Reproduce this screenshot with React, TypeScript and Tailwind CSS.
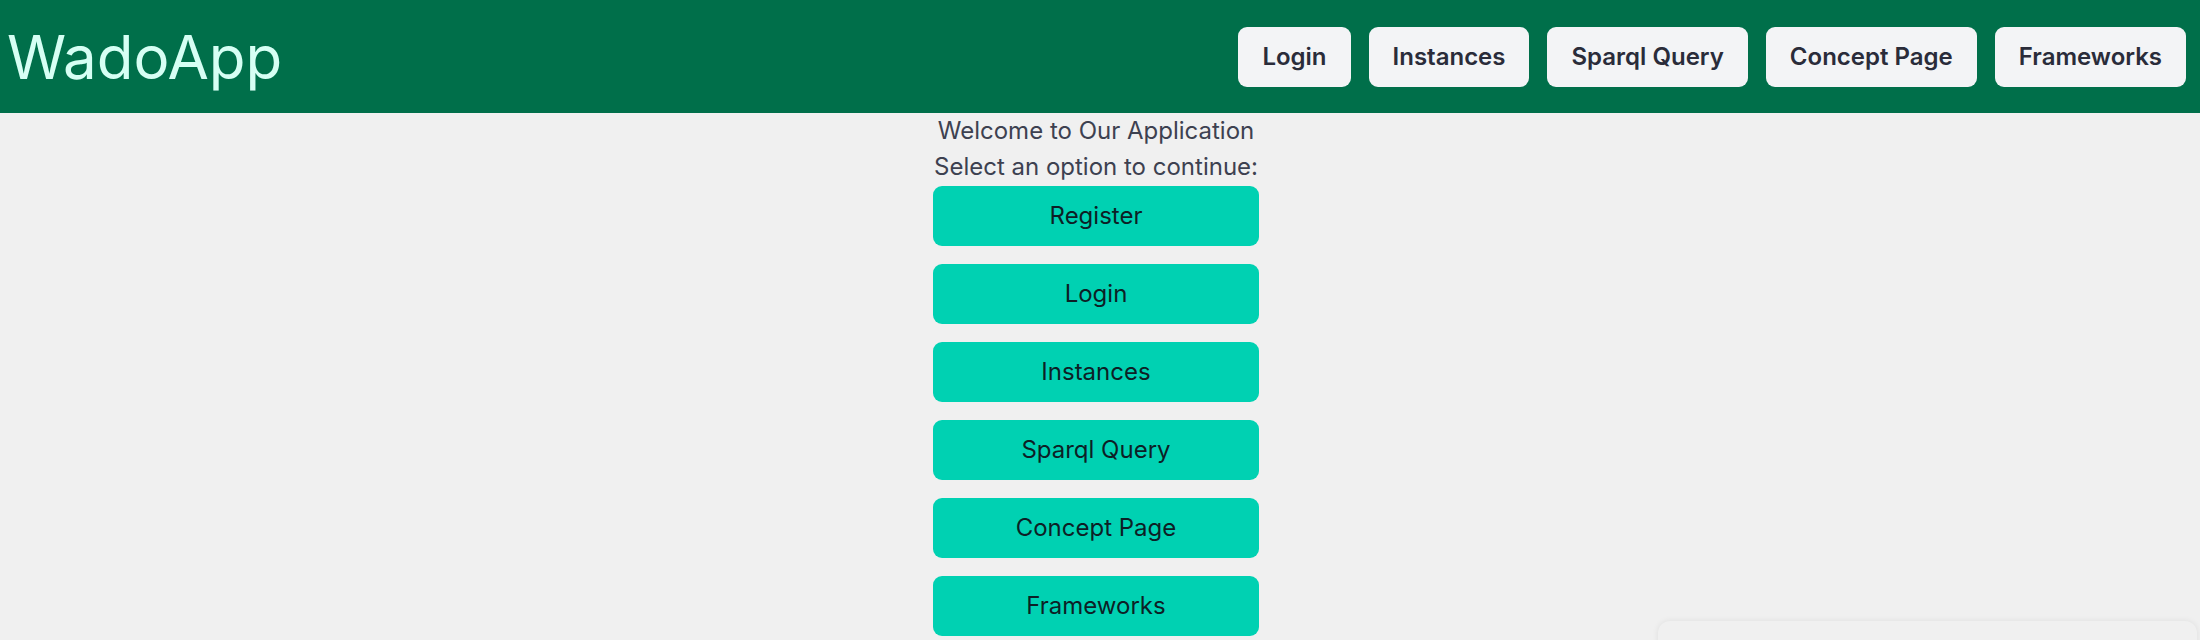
import React from "react";

const NAV_ITEMS = ["Login", "Instances", "Sparql Query", "Concept Page", "Frameworks"];
const OPTIONS = ["Register", "Login", "Instances", "Sparql Query", "Concept Page", "Frameworks"];

function Header() {
  return (
    <header className="flex h-[113px] w-full items-center justify-between bg-[#006f4a] pl-[7px] pr-[14px]">
      <h1 className="text-[60px] font-normal leading-none text-[#d6fff4]">WadoApp</h1>
      <nav className="flex items-center gap-[18px]">
        {NAV_ITEMS.map((label) => (
          <button
            key={label}
            className="h-[60px] rounded-[9px] bg-[#f3f4f6] px-6 text-[24px] font-semibold text-[#2a2c3a]"
          >
            {label}
          </button>
        ))}
      </nav>
    </header>
  );
}

export default function App() {
  return (
    <div
      className="relative h-[640px] w-full overflow-hidden bg-[#f0f0f0]"
      style={{ fontFamily: "Inter, 'Noto Sans', sans-serif" }}
    >
      <Header />
      <main className="flex flex-col items-center pr-2">
        <p className="text-[24px] leading-[36px] text-[#3d4150]">Welcome to Our Application</p>
        <p className="text-[24px] leading-[36px] text-[#3d4150]">Select an option to continue:</p>
        <div className="mt-px flex flex-col gap-[18px]">
          {OPTIONS.map((label) => (
            <button
              key={label}
              className="h-[60px] w-[326px] rounded-[9px] bg-[#00d1b2] text-[24px] text-[#0d1f26]"
            >
              {label}
            </button>
          ))}
        </div>
      </main>
      {/* floating widget peeking in from the bottom edge */}
      <div className="absolute left-[1658px] top-[621px] h-[80px] w-[539px] rounded-xl bg-[#f0f0f0] shadow-[0_0_6px_rgba(0,0,0,0.08)]" />
    </div>
  );
}
